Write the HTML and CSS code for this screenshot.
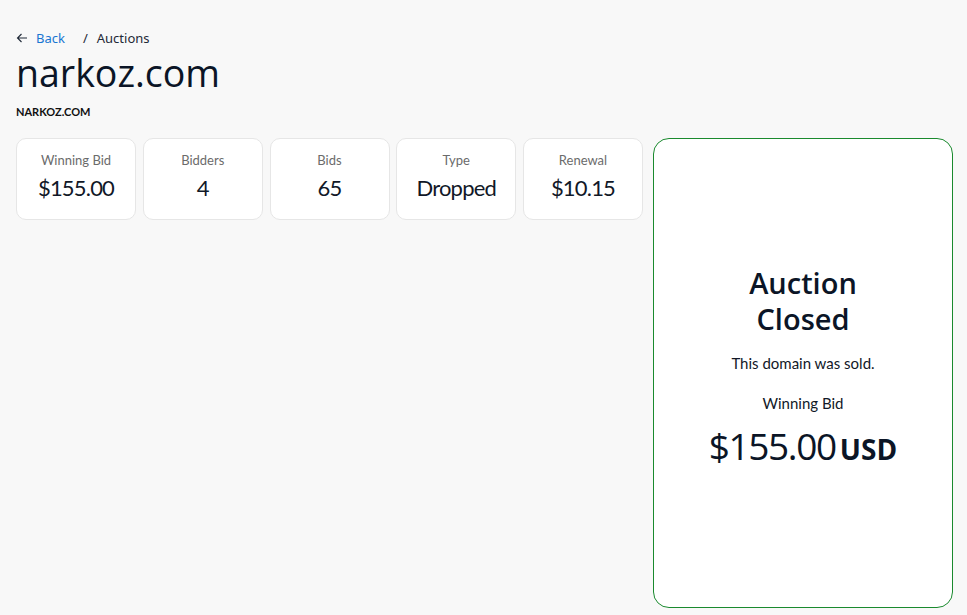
FILE: index.html
```html
<html>
    <head>
        <meta charset="utf-8">
        <link rel="stylesheet" href="styles.css">
    </head>
    <body>
        <div id="page">
            <div class="crumbs">
                <a class="back" href="#">
                    <svg width="12" height="12" viewBox="0 0 12 12"><path d="M11 6H1.5M5.5 2L1.5 6l4 4" fill="none" stroke="#1f2937" stroke-width="1.1"/></svg>
                    Back
                </a>
                <span class="sep">/</span>
                <span>Auctions</span>
            </div>

            <h1 class="domain">narkoz.com</h1>
            <div class="subdomain">NARKOZ.COM</div>

            <div class="row">
                <div class="stats">
                    <div class="stat">
                        <div class="label">Winning Bid</div>
                        <div class="value">$155.00</div>
                    </div>
                    <div class="stat">
                        <div class="label">Bidders</div>
                        <div class="value">4</div>
                    </div>
                    <div class="stat">
                        <div class="label">Bids</div>
                        <div class="value">65</div>
                    </div>
                    <div class="stat">
                        <div class="label">Type</div>
                        <div class="value">Dropped</div>
                    </div>
                    <div class="stat">
                        <div class="label">Renewal</div>
                        <div class="value">$10.15</div>
                    </div>
                </div>

                <div class="closed">
                    <h2>Auction Closed</h2>
                    <p class="note">This domain was sold.</p>
                    <p class="win-label">Winning Bid</p>
                    <div class="price"><span class="amount">$155.00</span> <span class="cur">USD</span></div>
                </div>
            </div>
        </div>
    </body>
</html>
```

FILE: styles.css
```css
body {
    margin: 0;
    background-color: #f8f8f8;
    color: #111827;
    font-family: "Lato", "Noto Sans", sans-serif;
}

#page {
    padding: 28px 14px 0 16px;
}

.crumbs {
    display: flex;
    align-items: center;
    height: 20px;
    font-family: "Noto Sans", sans-serif;
    font-size: 13px;
    color: #1f2937;
}

.back {
    display: flex;
    align-items: center;
    gap: 8px;
    color: #1976d2;
    text-decoration: none;
}

.sep {
    margin: 0 9px 0 18px;
}

.domain {
    margin: 3px 0 0 0;
    font-family: "Open Sans", sans-serif;
    font-weight: 400;
    font-size: 37.5px;
    line-height: 44px;
    color: #0b1526;
}

.subdomain {
    margin-top: 9px;
    font-size: 11px;
    line-height: 16px;
    font-weight: 700;
    color: #111;
}

.row {
    display: flex;
    align-items: flex-start;
    gap: 10px;
    margin-top: 18px;
}

.stats {
    display: flex;
    gap: 6.75px;
}

.stat {
    width: 120px;
    height: 82px;
    box-sizing: border-box;
    background: #fff;
    border: 1px solid #e6e6e6;
    border-radius: 10px;
    text-align: center;
    padding-top: 12px;
}

.label {
    font-size: 13px;
    line-height: 18px;
    color: #6b6b6b;
}

.value {
    margin-top: 5px;
    font-size: 22px;
    line-height: 28px;
    letter-spacing: -0.8px;
    color: #111827;
}

.closed {
    width: 300px;
    height: 470px;
    box-sizing: border-box;
    background: #fff;
    border: 1px solid #1a8a2e;
    border-radius: 16px;
    display: flex;
    flex-direction: column;
    align-items: center;
    justify-content: center;
    text-align: center;
    padding: 6px 40px 12px 40px;
}

.closed h2 {
    margin: 0;
    width: 150px;
    font-family: "Open Sans", sans-serif;
    font-weight: 600;
    font-size: 29px;
    line-height: 36px;
    color: #0b1526;
}

.note {
    margin: 16px 0 0 0;
    font-size: 15px;
    line-height: 20px;
}

.win-label {
    margin: 20px 0 0 0;
    font-size: 15px;
    line-height: 20px;
}

.price {
    margin-top: 11px;
    white-space: nowrap;
    font-family: "Open Sans", sans-serif;
    line-height: 44px;
    color: #0b1526;
}

.amount {
    font-size: 37px;
    letter-spacing: -1.4px;
}

.cur {
    font-size: 28px;
    font-weight: 700;
}
```
